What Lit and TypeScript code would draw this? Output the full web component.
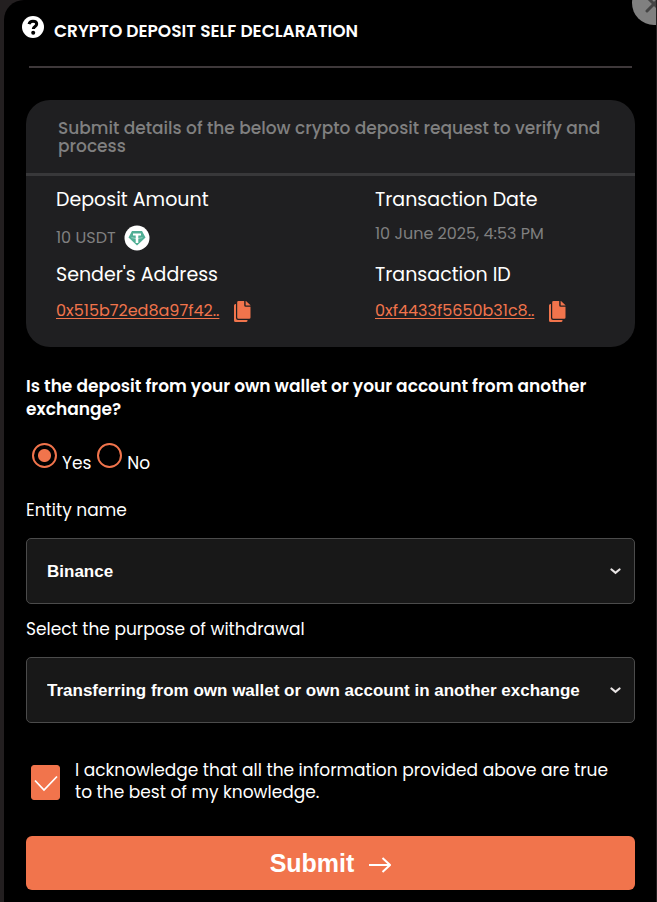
import { LitElement, html, svg, css } from "lit";
import { customElement, state } from "lit/decorators.js";

const copyIcon = svg`<svg class="copy-icon" viewBox="0 0 17 21" aria-hidden="true">
  <path fill="#f1744c" d="M0 4.5Q0 3 1.5 3H2V17Q2 19 4 19H13.5V19.5Q13.5 21 12 21H1.5Q0 21 0 19.5Z"/>
  <path fill="#f1744c" d="M3.2 1.3Q3.2 0 4.5 0H10.2V4.2Q10.2 5.8 11.8 5.8H16.5V16.5Q16.5 17.8 15.2 17.8H4.5Q3.2 17.8 3.2 16.5Z"/>
  <path fill="#f1744c" d="M11.6 0H12L16.5 4.3V4.6H12.3Q11.6 4.6 11.6 3.9Z"/>
</svg>`;

@customElement("app-root")
export class AppRoot extends LitElement {
  @state() private ownWallet = true;
  @state() private acknowledged = true;

  static styles = css`
    :host {
      display: block;
      min-height: 100vh;
      box-sizing: border-box;
      padding: 0 1px 0 4px;
      background: #231f20;
      color: #fff;
      font-family: Poppins, Inter, "Open Sans", sans-serif;
      font-size: 17px;
      line-height: 24px;
      overflow: hidden;
    }
    * { box-sizing: border-box; }
    h1, h2, p, dl, dt, dd { margin: 0; padding: 0; border: 0; }
    .panel {
      position: relative;
      min-height: 100vh;
      padding: 16px 21px 12px 22px;
      border-radius: 20px 0 0 0;
      background: #000;
      overflow: hidden;
    }
    .close {
      position: absolute;
      top: -19px;
      right: -20px;
      width: 44px;
      height: 44px;
      padding: 0;
      border: 0;
      border-radius: 50%;
      background: #808080;
      cursor: pointer;
    }
    .close svg { display: block; width: 44px; height: 44px; }
    .header {
      display: flex;
      align-items: center;
      gap: 10px;
      height: 52px;
      margin: 0 3px;
      border-bottom: 2px solid #3e383a;
    }
    .help { width: 22px; height: 22px; flex: none; align-self: flex-start; margin-left: -7px; }
    h1 { font-size: 17px; line-height: 24px; font-weight: 600; margin-bottom: 20px; }
    .card { margin-top: 32px; border-radius: 24px; background: #1f1f21; }
    .card-title {
      padding: 19px 16px 18px 32px;
      border-bottom: 3px solid #38383a;
      color: #808080;
      font-size: 17px;
      line-height: 18px;
      font-weight: 500;
    }
    .details {
      display: grid;
      grid-template-columns: 319fr 260fr;
      padding: 12px 0 12px 30px;
    }
    .details dt { font-size: 19px; line-height: 24px; }
    .details dd {
      display: flex;
      align-items: center;
      height: 51px;
      color: #808080;
      font-size: 16px;
    }
    .details .date { align-items: flex-start; padding-top: 10px; }
    .details .link-row { height: 48px; }
    .coin { width: 26px; height: 26px; margin-left: 8px; }
    .link-row a { color: #f1744c; font-size: 16px; text-underline-offset: 2px; }
    .copy { display: flex; padding: 0; margin-left: 15px; border: 0; background: none; cursor: pointer; }
    .copy-icon { width: 17px; height: 21px; }
    .question { margin-top: 28px; font-weight: 600; line-height: 23px; }
    .choices { display: flex; gap: 6px; margin-top: 22px; padding-left: 6px; height: 32px; }
    .choice { display: flex; gap: 5px; align-items: flex-end; line-height: 24px; }
    .choice input {
      appearance: none;
      width: 25px;
      height: 25px;
      margin: 0;
      align-self: flex-start;
      border: 2px solid #f1744c;
      border-radius: 50%;
    }
    .choice input:checked { background: radial-gradient(circle, #f1744c 6px, transparent 7px); }
    .label { display: block; margin-top: 23px; }
    .label.second { margin-top: 13px; }
    .field { position: relative; margin-top: 16px; }
    select {
      appearance: none;
      display: block;
      width: 100%;
      height: 66px;
      padding: 0 36px 0 20px;
      border: 1px solid #4b4b4b;
      border-radius: 5px;
      background: #181818;
      color: #fff;
      font: 700 17px "Liberation Sans", Arial, sans-serif;
    }
    .chevron { position: absolute; right: 14px; top: 29px; width: 11px; height: 8px; pointer-events: none; }
    .ack { display: flex; gap: 15px; margin: 36px 0 0 5px; padding-right: 8px; line-height: 22px; }
    .ack-box { display: grid; flex: none; margin-top: 6px; width: 29px; height: 35px; }
    .ack-box > * { grid-area: 1 / 1; }
    .ack-box input {
      appearance: none;
      width: 29px;
      height: 35px;
      margin: 0;
      border: 1px solid #f1744c;
      border-radius: 3px;
    }
    .ack-box input:checked { background: #f1744c; }
    .ack-box svg { width: 29px; height: 35px; pointer-events: none; }
    .submit {
      display: flex;
      align-items: center;
      justify-content: center;
      gap: 15px;
      width: 100%;
      height: 54px;
      margin-top: 33px;
      padding: 0;
      border: 0;
      border-radius: 6px;
      background: #f1744c;
      color: #fff;
      font: 700 25px "Liberation Sans", Arial, sans-serif;
      cursor: pointer;
    }
    .submit svg { width: 22px; height: 16px; margin-top: 4px; }
  `;

  private chevron() {
    return html`<svg class="chevron" viewBox="0 0 11 8" aria-hidden="true">
      <path d="M1.5 2.5 5.5 5.8 9.5 2.5" fill="none" stroke="#e8e4e4" stroke-width="2.2" stroke-linecap="round"/>
    </svg>`;
  }

  render() {
    return html`
      <main class="panel">
        <button class="close" aria-label="Close">
          <svg viewBox="0 0 44 44" aria-hidden="true">
            <path d="M15 30 29 16M15 16 29 30" stroke="#444" stroke-width="3" stroke-linecap="round"/>
          </svg>
        </button>
        <header class="header">
          <svg class="help" viewBox="0 0 22 22" aria-hidden="true">
            <circle cx="11" cy="11" r="11" fill="#fff"/>
            <path d="M7 8.1C7.6 5.9 9 5.2 10.9 5.2c2.2 0 3.8 1.1 3.8 2.9 0 2.5-3.4 2.2-3.4 4.9" fill="none" stroke="#000" stroke-width="3"/>
            <circle cx="11.2" cy="16.7" r="2" fill="#000"/>
          </svg>
          <h1>CRYPTO DEPOSIT SELF DECLARATION</h1>
        </header>

        <section class="card">
          <h2 class="card-title">Submit details of the below crypto deposit request to verify and process</h2>
          <dl class="details">
            <div>
              <dt>Deposit Amount</dt>
              <dd>10 USDT
                <svg class="coin" viewBox="0 0 26 26" aria-hidden="true">
                  <circle cx="13" cy="13" r="12.5" fill="#fff"/>
                  <path d="M8 6H18L21.5 12.5 13 20.5 4.5 12.5Z" fill="#50af95"/>
                  <path d="M9 8.5H17V10.6H14.3V18H11.7V10.6H9Z" fill="#fff"/>
                  <path d="M7.5 12.6Q13 15 18.5 12.6" fill="none" stroke="#fff" stroke-opacity=".6" stroke-width=".7"/>
                </svg>
              </dd>
            </div>
            <div>
              <dt>Transaction Date</dt>
              <dd class="date">10 June 2025, 4:53 PM</dd>
            </div>
            <div>
              <dt>Sender's Address</dt>
              <dd class="link-row">
                <a href="#address">0x515b72ed8a97f42..</a>
                <button class="copy" aria-label="Copy address">${copyIcon}</button>
              </dd>
            </div>
            <div>
              <dt>Transaction ID</dt>
              <dd class="link-row">
                <a href="#transaction">0xf4433f5650b31c8..</a>
                <button class="copy" aria-label="Copy transaction ID">${copyIcon}</button>
              </dd>
            </div>
          </dl>
        </section>

        <p class="question" id="own-question">Is the deposit from your own wallet or your account from another exchange?</p>
        <div class="choices" role="radiogroup" aria-labelledby="own-question">
          <label class="choice"><input type="radio" name="own" .checked=${this.ownWallet} @change=${() => (this.ownWallet = true)}>Yes</label>
          <label class="choice"><input type="radio" name="own" .checked=${!this.ownWallet} @change=${() => (this.ownWallet = false)}>No</label>
        </div>

        <label class="label" for="entity">Entity name</label>
        <div class="field">
          <select id="entity"><option>Binance</option></select>
          ${this.chevron()}
        </div>

        <label class="label second" for="purpose">Select the purpose of withdrawal</label>
        <div class="field">
          <select id="purpose"><option>Transferring from own wallet or own account in another exchange</option></select>
          ${this.chevron()}
        </div>

        <div class="ack">
          <span class="ack-box">
            <input id="ack" type="checkbox" .checked=${this.acknowledged}
              @change=${(e: Event) => (this.acknowledged = (e.target as HTMLInputElement).checked)}>
            ${this.acknowledged
              ? html`<svg viewBox="0 0 29 35" aria-hidden="true"><path d="M4 15.5 13 25 26 11.5" fill="none" stroke="#fff" stroke-width="1.8"/></svg>`
              : null}
          </span>
          <label for="ack">I acknowledge that all the information provided above are true to the best of my knowledge.</label>
        </div>

        <button class="submit">Submit
          <svg viewBox="0 0 22 16" aria-hidden="true">
            <path d="M0 8H21M13.5 1 21 8 13.5 15" fill="none" stroke="#fff" stroke-width="2"/>
          </svg>
        </button>
      </main>
    `;
  }
}
